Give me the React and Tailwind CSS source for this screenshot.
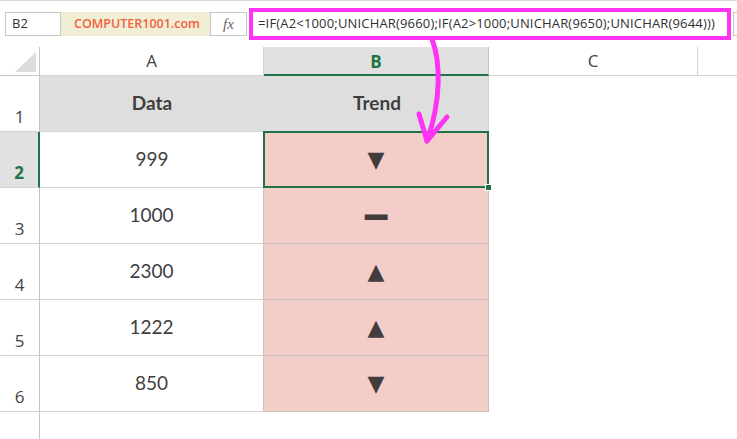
import React from "react";

const rows = [
  { n: 3, v: "1000", t: "▬" },
  { n: 4, v: "2300", t: "▲" },
  { n: 5, v: "1222", t: "▲" },
  { n: 6, v: "850", t: "▼" },
];

const cellFont = { fontFamily: "Lato, 'Open Sans', sans-serif" };
const uiFont = { fontFamily: "'Open Sans', 'Noto Sans', sans-serif" };
const symFont = { fontFamily: "'DejaVu Sans', sans-serif" };

function Trend({ t }) {
  if (t === "▬") {
    return (
      <span style={symFont} className="inline-block text-[30px] leading-none text-[#433c3c] scale-y-[0.5]">
        {t}
      </span>
    );
  }
  return (
    <span style={symFont} className="inline-block text-[22px] leading-none text-[#433c3c]">
      {t}
    </span>
  );
}

const App = () => {
  return (
    <div className="relative w-[737px] h-[439px] overflow-hidden bg-white border-t border-[#dadada]">
      {/* formula bar */}
      <div className="flex h-[46px] items-center">
        <div
          style={uiFont}
          className="ml-[5px] flex h-[24px] w-[56px] items-center border border-[#c6c6c6] pl-[6px] text-[13px] text-[#333]"
        >
          B2
        </div>
        <div className="flex h-[24px] w-[149px] items-center bg-[#f1eed6]">
          <span
            style={uiFont}
            className="ml-[13px] text-[12.5px] font-semibold text-[#f2603e]"
          >
            COMPUTER1001.com
          </span>
        </div>
        <div className="flex h-[24px] w-[37px] items-center justify-center border border-[#c6c6c6] bg-white">
          <span
            style={{ fontFamily: "'Liberation Serif', serif" }}
            className="text-[15px] italic text-[#666]"
          >
            fx
          </span>
        </div>
        <div className="ml-[2px] flex h-[32px] w-[482px] items-center border-4 border-[#ff33f5] bg-white pl-[5px]">
          <span style={uiFont} className="text-[13px] tracking-[0.17px] text-[#303030] whitespace-nowrap">
            =IF(A2&lt;1000;UNICHAR(9660);IF(A2&gt;1000;UNICHAR(9650);UNICHAR(9644)))
          </span>
        </div>
        <div className="ml-[2px] h-[24px] flex-1 border-l border-y border-[#c6c6c6]" />
      </div>

      {/* sheet */}
      <div className="grid grid-cols-[40px_224px_225px_209px_1fr]">
        {/* column headers */}
        <div className="relative h-[29px] border-r border-b border-[#c6c6c6]">
          <svg className="absolute right-[3px] bottom-[3px]" width="21" height="20">
            <polygon points="21,0 21,20 0,20" fill="#dcdcdc" />
          </svg>
        </div>
        <div
          style={uiFont}
          className="flex h-[29px] items-center justify-center border-r border-b border-[#d4d4d4] text-[17px] text-[#444]"
        >
          A
        </div>
        <div
          style={uiFont}
          className="flex h-[29px] items-center justify-center border-r border-b-2 border-r-[#c6c6c6] border-b-[#217346] bg-[#e1e1e1] pt-[2px] text-[17px] font-bold text-[#217346]"
        >
          B
        </div>
        <div
          style={uiFont}
          className="flex h-[29px] items-center justify-center border-r border-b border-[#d4d4d4] text-[17px] text-[#444]"
        >
          C
        </div>
        <div className="h-[29px] border-b border-[#d4d4d4]" />

        {/* row 1 */}
        <div
          style={uiFont}
          className="flex h-[56px] items-end justify-center border-r border-b border-r-[#c6c6c6] border-b-[#d4d4d4] pb-[2px] text-[17px] text-[#444]"
        >
          1
        </div>
        <div
          style={cellFont}
          className="flex h-[56px] items-center justify-center border-b border-[#d4d4d4] bg-[#dedede] text-[19px] font-bold text-[#3f3f3f]"
        >
          Data
        </div>
        <div
          style={cellFont}
          className="flex h-[56px] items-center justify-center border-r border-b border-r-[#d4d4d4] border-b-[#d4d4d4] bg-[#dedede] pl-[2px] text-[19px] font-bold text-[#3f3f3f]"
        >
          Trend
        </div>
        <div className="h-[56px]" />
        <div className="h-[56px]" />

        {/* row 2 (selected) */}
        <div
          style={uiFont}
          className="flex h-[56px] items-end justify-center border-r-2 border-b border-r-[#217346] border-b-[#d4d4d4] bg-[#e1e1e1] pb-[2px] text-[17px] font-bold text-[#217346]"
        >
          2
        </div>
        <div
          style={cellFont}
          className="flex h-[56px] items-center justify-center border-b border-[#d4d4d4] text-[19px] text-[#3f3f3f]"
        >
          999
        </div>
        <div className="relative flex h-[56px] items-center justify-center border-r border-b border-[#cdbdbd] bg-[#f3cdc8]">
          <Trend t="▼" />
          <div className="absolute -left-[1px] -top-[1px] -right-[1px] -bottom-[1px] border-2 border-[#217346]" />
          <div className="absolute -right-[4px] -bottom-[4px] h-[7px] w-[7px] border border-white bg-[#217346]" />
        </div>
        <div className="h-[56px]" />
        <div className="h-[56px]" />

        {rows.map((r) => (
          <React.Fragment key={r.n}>
            <div
              style={uiFont}
              className="flex h-[56px] items-end justify-center border-r border-b border-r-[#c6c6c6] border-b-[#d4d4d4] pb-[2px] text-[17px] text-[#444]"
            >
              {r.n}
            </div>
            <div
              style={cellFont}
              className="flex h-[56px] items-center justify-center border-r border-b border-r-[#c6c6c6] border-b-[#d4d4d4] text-[19px] text-[#3f3f3f]"
            >
              {r.v}
            </div>
            <div className="flex h-[56px] items-center justify-center border-r border-b border-[#cdbdbd] bg-[#f3cdc8]">
              <Trend t={r.t} />
            </div>
            <div className="h-[56px]" />
            <div className="h-[56px]" />
          </React.Fragment>
        ))}

        {/* below */}
        <div className="h-[40px] border-r border-[#c6c6c6]" />
      </div>

      {/* magenta arrow */}
      <svg className="pointer-events-none absolute left-0 top-0" width="737" height="439">
        <path
          d="M432 38 C 441 62, 441 100, 427 140"
          fill="none"
          stroke="#ff33f5"
          strokeWidth="5"
          strokeLinecap="round"
        />
        <path
          d="M419 113 L427 140 L447 116"
          fill="none"
          stroke="#ff33f5"
          strokeWidth="5"
          strokeLinecap="round"
          strokeLinejoin="round"
        />
      </svg>
    </div>
  );
};

export default App;
